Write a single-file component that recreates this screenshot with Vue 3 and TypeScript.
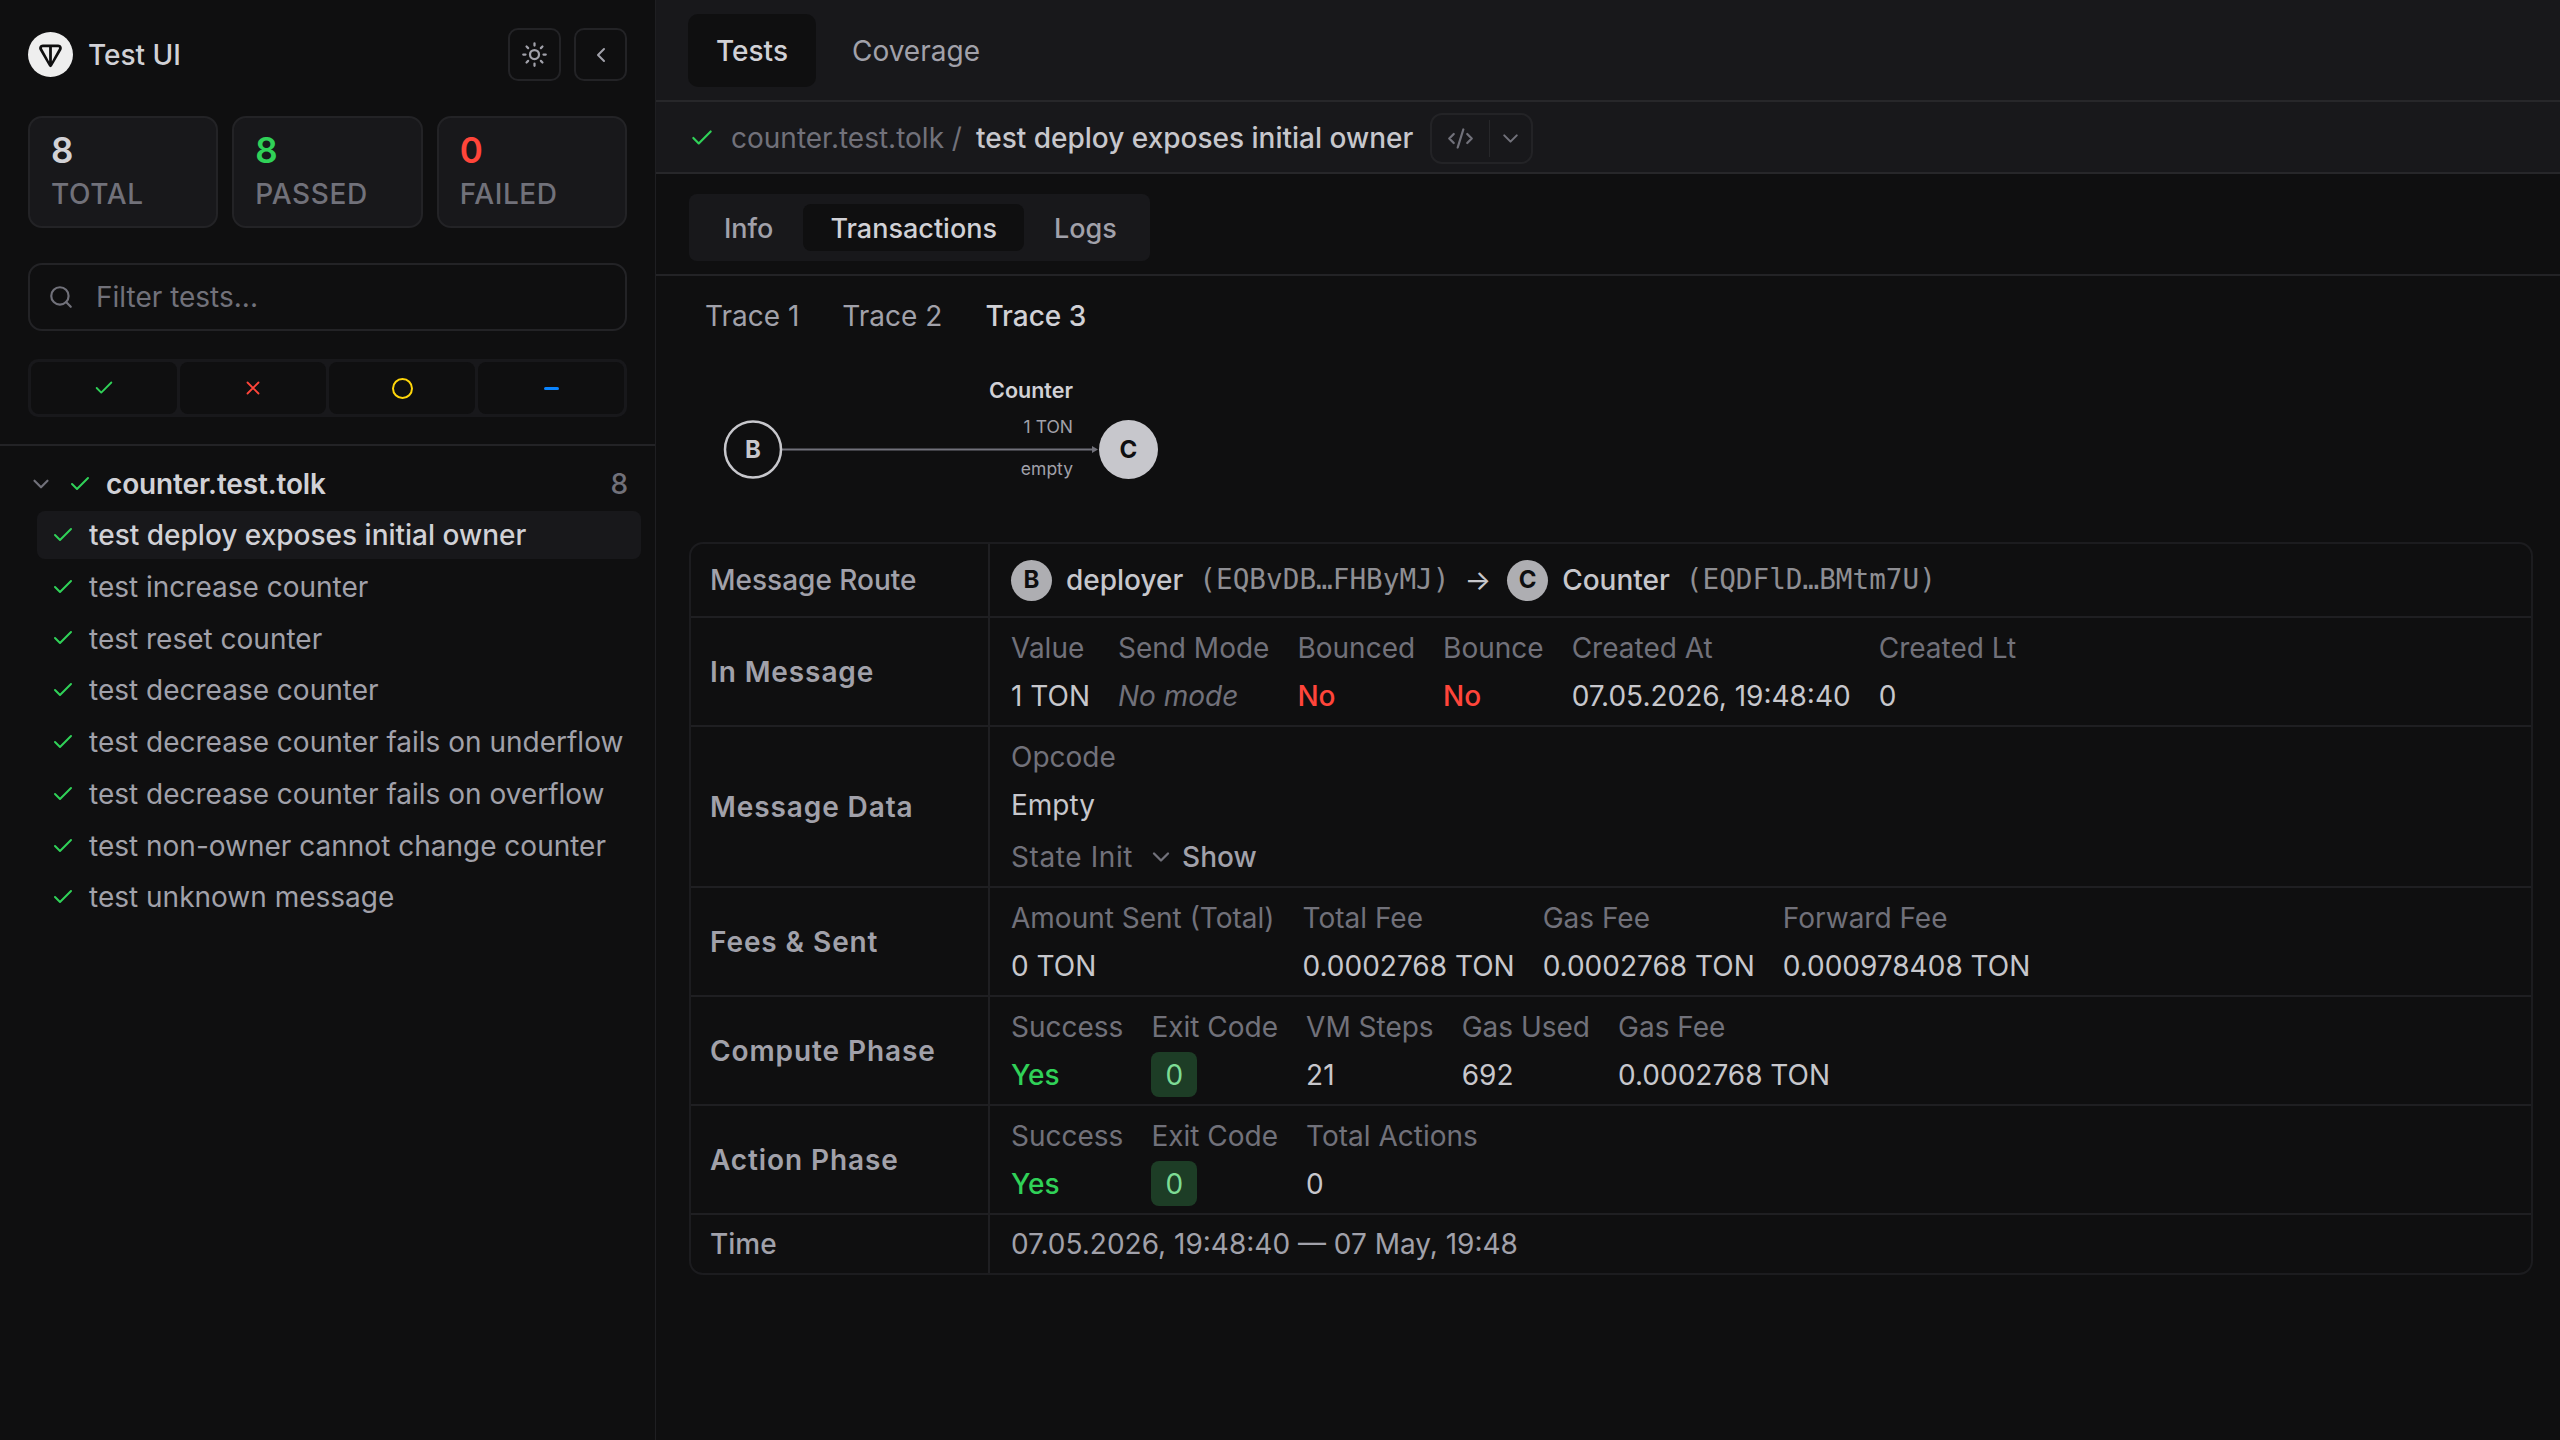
<script setup lang="ts">
interface Cell {
  label: string
  value: string
  kind?: 'no' | 'yes' | 'muted' | 'code'
}

const stats = [
  { value: '8', label: 'TOTAL', tone: '' },
  { value: '8', label: 'PASSED', tone: 'green' },
  { value: '0', label: 'FAILED', tone: 'red' },
]

const tests = [
  'test deploy exposes initial owner',
  'test increase counter',
  'test reset counter',
  'test decrease counter',
  'test decrease counter fails on underflow',
  'test decrease counter fails on overflow',
  'test non-owner cannot change counter',
  'test unknown message',
]

const inMessage: Cell[] = [
  { label: 'Value', value: '1 TON' },
  { label: 'Send Mode', value: 'No mode', kind: 'muted' },
  { label: 'Bounced', value: 'No', kind: 'no' },
  { label: 'Bounce', value: 'No', kind: 'no' },
  { label: 'Created At', value: '07.05.2026, 19:48:40' },
  { label: 'Created Lt', value: '0' },
]

const fees: Cell[] = [
  { label: 'Amount Sent (Total)', value: '0 TON' },
  { label: 'Total Fee', value: '0.0002768 TON' },
  { label: 'Gas Fee', value: '0.0002768 TON' },
  { label: 'Forward Fee', value: '0.000978408 TON' },
]

const compute: Cell[] = [
  { label: 'Success', value: 'Yes', kind: 'yes' },
  { label: 'Exit Code', value: '0', kind: 'code' },
  { label: 'VM Steps', value: '21' },
  { label: 'Gas Used', value: '692' },
  { label: 'Gas Fee', value: '0.0002768 TON' },
]

const action: Cell[] = [
  { label: 'Success', value: 'Yes', kind: 'yes' },
  { label: 'Exit Code', value: '0', kind: 'code' },
  { label: 'Total Actions', value: '0' },
]

const phaseRows = [
  { title: 'Fees & Sent', cells: fees },
  { title: 'Compute Phase', cells: compute },
  { title: 'Action Phase', cells: action },
]
</script>

<template>
  <div class="app">
    <aside class="sidebar">
      <div class="side-top">
        <div class="brand">
          <svg class="logo" viewBox="0 0 56 56">
            <circle cx="28" cy="28" r="28" fill="#eeeeee" />
            <path
              fill="#0f0f10"
              d="M37.56 15.5H18.44C14.95 15.5 12.73 19.27 14.49 22.32L26.28 42.76C27.05 44.1 28.98 44.1 29.75 42.76L41.54 22.32C43.29 19.28 41.07 15.5 37.57 15.5H37.56ZM26.27 36.66L23.7 31.69L17.5 20.6C17.09 19.89 17.6 18.98 18.45 18.98H26.27V36.66ZM38.5 20.6L32.3 31.7L29.73 36.66V18.98H37.55C38.4 18.98 38.91 19.89 38.5 20.6Z"
            />
          </svg>
          <span class="brand-name">Test UI</span>
          <button class="icon-btn">
            <svg class="ic sun" viewBox="0 0 24 24">
              <circle cx="12" cy="12" r="4" />
              <path d="M12 2v2M12 20v2M4.93 4.93l1.41 1.41M17.66 17.66l1.41 1.41M2 12h2M20 12h2M6.34 17.66l-1.41 1.41M19.07 4.93l-1.41 1.41" />
            </svg>
          </button>
          <button class="icon-btn">
            <svg class="ic" viewBox="0 0 24 24"><path d="m15 18-6-6 6-6" /></svg>
          </button>
        </div>

        <div class="stats">
          <div v-for="s in stats" :key="s.label" class="stat">
            <div class="stat-value" :class="s.tone">{{ s.value }}</div>
            <div class="stat-label">{{ s.label }}</div>
          </div>
        </div>

        <div class="search">
          <svg class="search-ic" viewBox="0 0 24 24">
            <circle cx="11" cy="11" r="8" />
            <path d="m21 21-4.3-4.3" />
          </svg>
          <span>Filter tests...</span>
        </div>

        <div class="filters">
          <div class="filter">
            <svg class="f-ic green-s" viewBox="0 0 24 24"><path d="M20 6 9 17l-5-5" /></svg>
          </div>
          <div class="filter">
            <svg class="f-ic red-s" viewBox="0 0 24 24"><path d="M18 6 6 18M6 6l12 12" /></svg>
          </div>
          <div class="filter">
            <span class="ring"></span>
          </div>
          <div class="filter">
            <span class="dash"></span>
          </div>
        </div>
      </div>

      <div class="tree">
        <div class="group">
          <svg class="group-chev" viewBox="0 0 24 24"><path d="m6 9 6 6 6-6" /></svg>
          <svg class="check" viewBox="0 0 24 24"><path d="M20 6 9 17l-5-5" /></svg>
          <span class="group-name">counter.test.tolk</span>
          <span class="group-count">8</span>
        </div>
        <div
          v-for="(t, i) in tests"
          :key="t"
          class="test-row"
          :class="{ selected: i === 0 }"
        >
          <svg class="check" viewBox="0 0 24 24"><path d="M20 6 9 17l-5-5" /></svg>
          <span>{{ t }}</span>
        </div>
      </div>
    </aside>

    <main class="main">
      <div class="topbar">
        <div class="top-tab active">Tests</div>
        <div class="top-tab">Coverage</div>
      </div>

      <div class="crumb">
        <svg class="crumb-check" viewBox="0 0 24 24"><path d="M20 6 9 17l-5-5" /></svg>
        <span class="crumb-file">counter.test.tolk /</span>
        <span class="crumb-name">test deploy exposes initial owner</span>
        <div class="source-btn">
          <span class="source-part code">
            <svg class="src-ic" viewBox="0 0 24 24"><path d="m18 16 4-4-4-4M6 8l-4 4 4 4M14.5 4l-5 16" /></svg>
          </span>
          <span class="source-part">
            <svg class="src-ic small" viewBox="0 0 24 24"><path d="m6 9 6 6 6-6" /></svg>
          </span>
        </div>
      </div>

      <div class="subtabs-bar">
        <div class="subtabs">
          <div class="subtab">Info</div>
          <div class="subtab active">Transactions</div>
          <div class="subtab">Logs</div>
        </div>
      </div>

      <div class="content">
        <div class="traces">
          <span class="trace">Trace 1</span>
          <span class="trace">Trace 2</span>
          <span class="trace active">Trace 3</span>
        </div>

        <svg class="diagram" width="480" height="130" viewBox="0 0 480 130">
          <line x1="82" y1="84.5" x2="394" y2="84.5" stroke="#71717a" stroke-width="2" />
          <path d="M393 81l6 3.5-6 3.5z" fill="#71717a" />
          <circle cx="54" cy="84.5" r="28" fill="none" stroke="#c7c7cc" stroke-width="2.5" />
          <text x="54" y="93" class="node-letter" fill="#c7c7cc">B</text>
          <circle cx="429.5" cy="84.5" r="29.5" fill="#c7c7cc" />
          <text x="429.5" y="93" class="node-letter" fill="#0f0f10">C</text>
          <text x="374" y="33" class="edge-title">Counter</text>
          <text x="374" y="68" class="edge-text">1 TON</text>
          <text x="374" y="110" class="edge-text">empty</text>
        </svg>

        <div class="table">
          <div class="row">
            <div class="row-title plain">Message Route</div>
            <div class="row-body route">
              <span class="badge">B</span>
              <span class="route-name">deployer</span>
              <span class="addr">(EQBvDB…FHByMJ)</span>
              <span class="arrow">→</span>
              <span class="badge">C</span>
              <span class="route-name">Counter</span>
              <span class="addr">(EQDFlD…BMtm7U)</span>
            </div>
          </div>

          <div class="row">
            <div class="row-title">In Message</div>
            <div class="row-body cells">
              <div v-for="c in inMessage" :key="c.label" class="cell">
                <div class="cell-label">{{ c.label }}</div>
                <div class="cell-value" :class="c.kind">{{ c.value }}</div>
              </div>
            </div>
          </div>

          <div class="row">
            <div class="row-title">Message Data</div>
            <div class="row-body stacked">
              <div class="cell-label">Opcode</div>
              <div class="cell-value">Empty</div>
              <div class="state-init">
                <span class="cell-label state-label">State Init</span>
                <svg class="show-chev" viewBox="0 0 24 24"><path d="m6 9 6 6 6-6" /></svg>
                <span class="show">Show</span>
              </div>
            </div>
          </div>

          <div v-for="r in phaseRows" :key="r.title" class="row">
            <div class="row-title">{{ r.title }}</div>
            <div class="row-body cells">
              <div v-for="c in r.cells" :key="c.label" class="cell">
                <div class="cell-label">{{ c.label }}</div>
                <div class="cell-value" :class="c.kind">
                  <span v-if="c.kind === 'code'" class="exit-code">{{ c.value }}</span>
                  <template v-else>{{ c.value }}</template>
                </div>
              </div>
            </div>
          </div>

          <div class="row">
            <div class="row-title plain">Time</div>
            <div class="row-body time">07.05.2026, 19:48:40 — 07 May, 19:48</div>
          </div>
        </div>
      </div>
    </main>
  </div>
</template>

<style>
html,
body {
  margin: 0;
  background: #0f0f10;
}
</style>

<style scoped>
.app {
  display: flex;
  height: 1440px;
  overflow: hidden;
  background: #0f0f10;
  color: #c7c7cc;
  font-family: Inter, 'Liberation Sans', sans-serif;
  font-size: 28px;
  line-height: 48px;
}
svg {
  display: block;
  flex: none;
}

/* sidebar */
.sidebar {
  width: 656px;
  flex: none;
  box-sizing: border-box;
  border-right: 1px solid #1f1f22;
}
.side-top {
  height: 446px;
  box-sizing: border-box;
  padding: 28px 28px 0;
  border-bottom: 2px solid #232326;
}
.brand {
  display: flex;
  align-items: center;
  height: 53px;
}
.logo {
  width: 45px;
  height: 45px;
  margin-right: 15px;
}
.brand-name {
  font-weight: 500;
  color: #d1d1d6;
  flex: 1;
}
.icon-btn {
  width: 53px;
  height: 53px;
  display: flex;
  align-items: center;
  justify-content: center;
  padding: 0;
  background: transparent;
  border: 2px solid #232326;
  border-radius: 10px;
  margin-left: 13px;
}
.ic {
  width: 24px;
  height: 24px;
  fill: none;
  stroke: #a1a1aa;
  stroke-width: 2;
  stroke-linecap: round;
  stroke-linejoin: round;
}
.ic.sun {
  width: 27px;
  height: 27px;
}
.stats {
  display: flex;
  gap: 14px;
  margin-top: 35px;
}
.stat {
  flex: 1;
  height: 112px;
  box-sizing: border-box;
  padding: 10px 21px;
  background: #18181b;
  border: 2px solid #232326;
  border-radius: 14px;
}
.stat-value {
  font-size: 35px;
  font-weight: 600;
  line-height: 44px;
  color: #d1d1d6;
}
.stat-value.green {
  color: #30d158;
}
.stat-value.red {
  color: #ff453a;
}
.stat-label {
  font-weight: 500;
  line-height: 44px;
  letter-spacing: 0.6px;
  color: #71717a;
}
.search {
  display: flex;
  align-items: center;
  height: 68px;
  box-sizing: border-box;
  margin-top: 35px;
  padding-left: 18px;
  border: 2px solid #232326;
  border-radius: 14px;
  color: #71717a;
}
.search-ic {
  width: 26px;
  height: 26px;
  margin-right: 22px;
  fill: none;
  stroke: #71717a;
  stroke-width: 2;
  stroke-linecap: round;
}
.filters {
  display: flex;
  gap: 3px;
  height: 58px;
  box-sizing: border-box;
  margin-top: 28px;
  padding: 3px;
  background: #18181b;
  border-radius: 10px;
}
.filter {
  flex: 1;
  display: flex;
  align-items: center;
  justify-content: center;
  background: #0f0f10;
  border-radius: 8px;
}
.f-ic {
  width: 22px;
  height: 22px;
  fill: none;
  stroke-width: 2;
  stroke-linecap: round;
  stroke-linejoin: round;
}
.green-s {
  stroke: #30d158;
}
.red-s {
  stroke: #ff453a;
}
.ring {
  width: 21px;
  height: 21px;
  box-sizing: border-box;
  border: 2.5px solid #ffd60a;
  border-radius: 50%;
}
.dash {
  width: 15px;
  height: 3px;
  background: #0a84ff;
  border-radius: 2px;
}
.tree {
  padding: 13px 14px 0 37px;
}
.group {
  display: flex;
  align-items: center;
  height: 50px;
  margin: 0 0 2px -9px;
}
.group-chev {
  width: 26px;
  height: 26px;
  margin-right: 14px;
  fill: none;
  stroke: #71717a;
  stroke-width: 2;
  stroke-linecap: round;
  stroke-linejoin: round;
}
.check {
  width: 24px;
  height: 24px;
  fill: none;
  stroke: #30d158;
  stroke-width: 2;
  stroke-linecap: round;
  stroke-linejoin: round;
}
.group .check {
  margin-right: 14px;
}
.group-name {
  flex: 1;
  font-weight: 600;
  letter-spacing: -0.15px;
  color: #d1d1d6;
}
.group-count {
  font-weight: 500;
  color: #71717a;
  margin-right: 13px;
}
.test-row {
  display: flex;
  align-items: center;
  height: 47.8px;
  margin-bottom: 4px;
  padding-left: 14px;
  border-radius: 8px;
  color: #a1a1aa;
}
.test-row .check {
  margin-right: 14px;
}
.test-row.selected {
  background: #18181b;
  color: #d1d1d6;
  font-weight: 500;
}

/* main */
.main {
  flex: 1;
  min-width: 0;
}
.topbar {
  display: flex;
  gap: 8px;
  height: 102px;
  box-sizing: border-box;
  padding: 14px 32px 0;
  background: #18181b;
  border-bottom: 2px solid #27272a;
}
.top-tab {
  height: 73px;
  padding: 0 28px;
  line-height: 74px;
  color: #a1a1aa;
  border-radius: 10px;
}
.top-tab.active {
  background: #0f0f10;
  color: #d1d1d6;
  font-weight: 500;
}
.crumb {
  display: flex;
  align-items: center;
  height: 72px;
  box-sizing: border-box;
  padding: 2px 0 0 33px;
  background: #18181b;
  border-bottom: 2px solid #27272a;
}
.crumb-check {
  width: 26px;
  height: 26px;
  margin-right: 16px;
  fill: none;
  stroke: #30d158;
  stroke-width: 2;
  stroke-linecap: round;
  stroke-linejoin: round;
}
.crumb-file {
  color: #71717a;
  margin-right: 14px;
}
.crumb-name {
  color: #c7c7cc;
  font-weight: 500;
  margin-right: 17px;
}
.source-btn {
  display: flex;
  align-items: center;
  height: 51px;
  box-sizing: border-box;
  border: 2px solid #232326;
  border-radius: 12px;
}
.source-part {
  display: flex;
  align-items: center;
  justify-content: center;
  width: 41px;
  height: 37px;
}
.source-part.code {
  width: 57px;
  border-right: 1px solid #27272a;
}
.src-ic {
  width: 27px;
  height: 27px;
  fill: none;
  stroke: #71717a;
  stroke-width: 2;
  stroke-linecap: round;
  stroke-linejoin: round;
}
.src-ic.small {
  width: 25px;
  height: 25px;
}
.subtabs-bar {
  height: 102px;
  box-sizing: border-box;
  padding: 20px 32px 0 33px;
  border-bottom: 2px solid #232326;
}
.subtabs {
  display: inline-flex;
  gap: 3px;
  height: 67px;
  box-sizing: border-box;
  padding: 10px 6px 10px 8px;
  background: #18181b;
  border-radius: 8px;
}
.subtab {
  height: 47px;
  padding: 0 27px;
  font-size: 27px;
  line-height: 49px;
  color: #a1a1aa;
  font-weight: 500;
  border-radius: 8px;
}
.subtab.active {
  background: #0f0f10;
  color: #d1d1d6;
}
.content {
  padding: 0 27px 0 33px;
}
.traces {
  display: flex;
  height: 80px;
  align-items: center;
  gap: 43px;
  padding-left: 16px;
}
.trace {
  color: #a1a1aa;
}
.trace.active {
  color: #d1d1d6;
  font-weight: 500;
}
.diagram {
  margin: 9px 0 0 10px;
}
.node-letter {
  font-size: 24px;
  font-weight: 700;
  text-anchor: middle;
}
.edge-title {
  font-size: 21.5px;
  font-weight: 600;
  fill: #d1d1d6;
  text-anchor: end;
}
.edge-text {
  font-size: 17.5px;
  fill: #a1a1aa;
  text-anchor: end;
}
.table {
  margin-top: 47px;
  border: 2px solid #1c1c1f;
  border-radius: 14px;
}
.row {
  display: flex;
  border-bottom: 2px solid #1f1f22;
}
.row:last-child {
  border-bottom: 0;
}
.row-title {
  width: 299px;
  flex: none;
  box-sizing: border-box;
  display: flex;
  align-items: center;
  padding-left: 19px;
  border-right: 2px solid #1f1f22;
  color: #a1a1aa;
  font-weight: 600;
  letter-spacing: 0.9px;
}
.row-title.plain {
  font-weight: 500;
  letter-spacing: 0;
}
.row-body {
  flex: 1;
  padding: 5.5px 21px;
}
.route {
  display: flex;
  align-items: center;
  height: 72px;
  box-sizing: border-box;
  color: #c7c7cc;
}
.badge {
  width: 41px;
  height: 41px;
  flex: none;
  display: flex;
  align-items: center;
  justify-content: center;
  margin-right: 14px;
  border-radius: 50%;
  background: #aeaeb2;
  color: #0f0f10;
  font-size: 24px;
  font-weight: 700;
}
.route-name {
  font-weight: 500;
  margin-right: 16px;
}
.addr {
  font-family: 'DejaVu Sans Mono', 'Liberation Mono', monospace;
  font-size: 27.7px;
  color: #8e8e93;
}
.arrow {
  margin: 0 16px 0 15px;
}
.cells {
  display: flex;
  gap: 28px;
}
.cell-label {
  color: #71717a;
}
.state-label {
  letter-spacing: 0.6px;
}
.cell-value {
  color: #c7c7cc;
}
.cell-value.no {
  color: #ff453a;
  font-weight: 500;
}
.cell-value.yes {
  color: #30d158;
  font-weight: 500;
}
.cell-value.muted {
  color: #71717a;
  font-style: italic;
}
.exit-code {
  display: inline-flex;
  align-items: center;
  justify-content: center;
  width: 46px;
  height: 45px;
  border-radius: 8px;
  background: #1d3d26;
  color: #7ddc95;
}
.state-init {
  display: flex;
  align-items: center;
  margin-top: 4px;
}
.show-chev {
  width: 28px;
  height: 28px;
  margin: 0 7px 0 14px;
  fill: none;
  stroke: #71717a;
  stroke-width: 2;
  stroke-linecap: round;
  stroke-linejoin: round;
}
.show {
  color: #a1a1aa;
  font-weight: 500;
}
.time {
  color: #a1a1aa;
  height: 58px;
  box-sizing: border-box;
  padding-top: 5px;
}
</style>
